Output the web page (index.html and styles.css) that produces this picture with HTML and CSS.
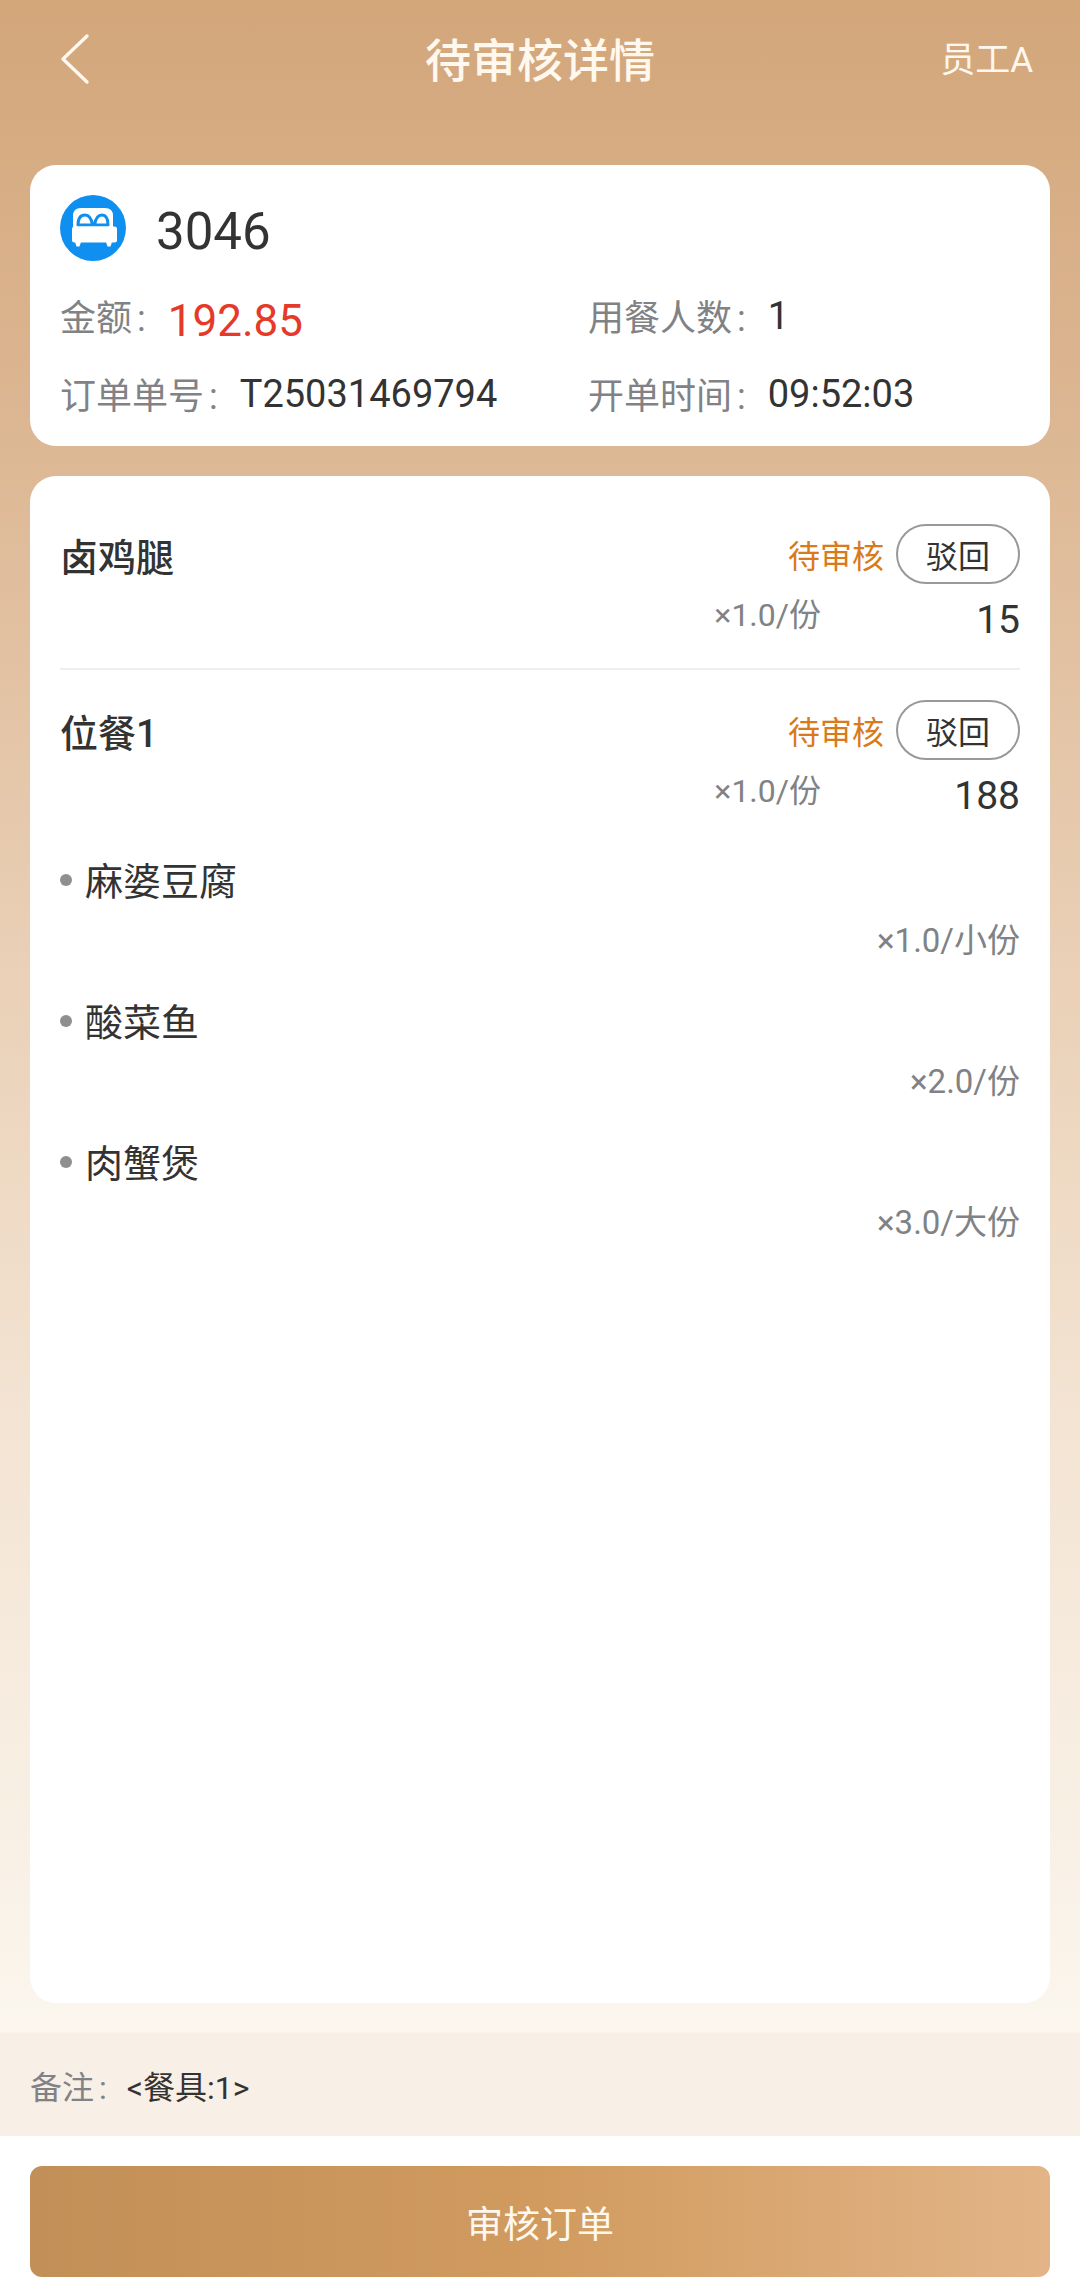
FILE: index.html
```html
<!DOCTYPE html>
<html lang="zh-CN">

<head>
    <meta charset="UTF-8">
    <title>待审核详情</title>
    <link rel="stylesheet" href="styles.css">
</head>

<body>
    <div class="page">
        <header class="topbar">
            <svg class="back" viewBox="0 0 30 52" width="30" height="52">
                <path d="M27 3 L3 26 L27 49" fill="none" stroke="#fff8ee" stroke-width="3.4" stroke-linecap="round" stroke-linejoin="round" />
            </svg>
            <h1>待审核详情</h1>
            <span class="staff">员工A</span>
        </header>

        <section class="card summary">
            <div class="table-row">
                <svg class="bed" viewBox="0 0 66 66" width="66" height="66">
                    <circle cx="33" cy="33" r="33" fill="#0f8ff0" />
                    <path d="M13 32 V21 Q13 13 21 13 H45 Q53 13 53 21 V32 Z" fill="#fff" />
                    <path d="M18 30 Q18 20 25 20 Q31 20 32.5 30 Z M34.5 30 Q36 20 42 20 Q48 20 48 30 Z" fill="#fff" stroke="#0f8ff0" stroke-width="3" stroke-linejoin="round" />
                    <rect x="12" y="31.5" width="45" height="16" rx="2.5" fill="#fff" />
                    <path d="M15 47 H21 L19.5 51.5 H16.5 Z M46 47 H52 L50.5 51.5 H47.5 Z" fill="#fff" />
                </svg>
                <span class="table-no">3046</span>
            </div>
            <div class="info-grid">
                <div class="info"><span class="label">金额<span class="colon">:</span></span><span class="amount">192.85</span></div>
                <div class="info"><span class="label">用餐人数<span class="colon">:</span></span><span class="value">1</span></div>
                <div class="info"><span class="label">订单单号<span class="colon">:</span></span><span class="value">T25031469794</span></div>
                <div class="info"><span class="label">开单时间<span class="colon">:</span></span><span class="value">09:52:03</span></div>
            </div>
        </section>

        <section class="card dishes">
            <div class="dish first">
                <div class="dish-top">
                    <span class="dish-name">卤鸡腿</span>
                    <span class="status">待审核</span>
                    <button class="reject">驳回</button>
                </div>
                <div class="dish-bottom">
                    <span class="qty">×1.0/份</span>
                    <span class="price">15</span>
                </div>
            </div>
            <div class="dish">
                <div class="dish-top">
                    <span class="dish-name">位餐1</span>
                    <span class="status">待审核</span>
                    <button class="reject">驳回</button>
                </div>
                <div class="dish-bottom">
                    <span class="qty">×1.0/份</span>
                    <span class="price">188</span>
                </div>
                <ul class="sub-list">
                    <li><span class="sub-name">麻婆豆腐</span><span class="qty">×1.0/小份</span></li>
                    <li><span class="sub-name">酸菜鱼</span><span class="qty">×2.0/份</span></li>
                    <li><span class="sub-name">肉蟹煲</span><span class="qty">×3.0/大份</span></li>
                </ul>
            </div>
        </section>

        <div class="remark"><span class="label">备注<span class="colon">:</span></span><span class="remark-text">&lt;餐具:1&gt;</span></div>

        <footer class="footer">
            <button class="submit">审核订单</button>
        </footer>
    </div>
</body>

</html>
```

FILE: styles.css
```css
* {
    margin: 0;
    padding: 0;
    box-sizing: border-box;
}

body {
    width: 1080px;
    height: 2293px;
    overflow: hidden;
    font-family: Roboto, "Noto Sans CJK SC", sans-serif;
    color: #333;
}

.page {
    display: flex;
    flex-direction: column;
    height: 2293px;
    background: linear-gradient(180deg, #d3a67a 0, #ddb895 460px, #e8cdb2 900px, #f3e3d2 1400px, #fbf6ee 2032px);
}

.topbar {
    display: grid;
    grid-template-columns: 1fr auto 1fr;
    align-items: center;
    height: 118px;
    margin-bottom: 47px;
    padding: 0 47px;
    color: #fff8ee;
}

.back {
    margin-left: 13px;
}

.topbar h1 {
    margin-bottom: 5px;
    font-size: 46px;
    font-weight: 500;
}

.staff {
    justify-self: end;
    margin-bottom: 5px;
    font-size: 35px;
}

.card {
    margin: 0 30px;
    background-color: #fff;
    border-radius: 26px;
}

.summary {
    height: 281px;
    padding: 30px 30px 0;
}

.table-row {
    display: flex;
    align-items: center;
    gap: 30px;
}

.table-no {
    padding-top: 6px;
    font-size: 51px;
}

.info-grid {
    display: grid;
    grid-template-columns: 528px 1fr;
    grid-auto-rows: 78px;
    margin-top: 15px;
    font-size: 36px;
}

.info {
    display: flex;
    align-items: center;
}

.label {
    margin-right: 22px;
    color: #808285;
}

.colon {
    margin-left: 5px;
}

.value {
    padding-top: 2px;
    font-size: 38px;
}

.amount {
    padding-top: 12px;
    font-size: 44px;
    color: #e5392a;
}

.dishes {
    flex: 1;
    margin-top: 30px;
    padding: 0 30px;
}

.dish {
    padding-top: 30px;
}

.dish.first {
    padding-top: 48px;
    padding-bottom: 30px;
    border-bottom: 2px solid #eeeeee;
}

.dish-top {
    display: flex;
    align-items: center;
    height: 60px;
}

.dish-name {
    flex: 1;
    font-size: 38px;
    font-weight: 500;
}

.status {
    font-size: 32px;
    color: #d97a1c;
}

.reject {
    width: 124px;
    height: 60px;
    margin-left: 12px;
    background-color: #fff;
    border: 2px solid #999;
    border-radius: 30px;
    font-family: inherit;
    font-size: 32px;
    color: #333;
}

.dish-bottom {
    display: flex;
    align-items: center;
    justify-content: flex-end;
    height: 54px;
}

.qty {
    font-size: 32px;
    color: #808285;
}

.dish-bottom .qty {
    padding-top: 2px;
}

.price {
    width: 199px;
    padding-top: 18px;
    font-size: 39px;
    text-align: right;
}

.sub-list {
    list-style: none;
    margin-top: 36px;
}

.sub-list li {
    display: flex;
    flex-direction: column;
    height: 141px;
    font-size: 38px;
}

.sub-name {
    display: flex;
    align-items: center;
    gap: 13px;
    height: 56px;
}

.sub-name::before {
    content: "";
    width: 12px;
    height: 12px;
    margin-top: 4px;
    border-radius: 50%;
    background-color: #8f8f8f;
}

.sub-list .qty {
    align-self: flex-end;
    margin-top: 8px;
    font-size: 33px;
}

.remark {
    display: flex;
    align-items: center;
    height: 133px;
    padding: 30px 30px 0;
    font-size: 32px;
    background: linear-gradient(180deg, rgba(248, 239, 230, 0) 0, rgba(248, 239, 230, 0) 29px, #f8efe6 30px);
}

.remark .label {
    margin-right: 20px;
}

.remark-text {
    color: #333;
}

.footer {
    height: 157px;
    padding: 30px 30px 0;
    background-color: #fff;
}

.submit {
    display: block;
    width: 100%;
    height: 111px;
    border: none;
    border-radius: 12px;
    background: linear-gradient(90deg, #c28f58, #d19b5f 50%, #e2b487);
    font-family: inherit;
    font-size: 37px;
    color: #fff8ee;
}
```
